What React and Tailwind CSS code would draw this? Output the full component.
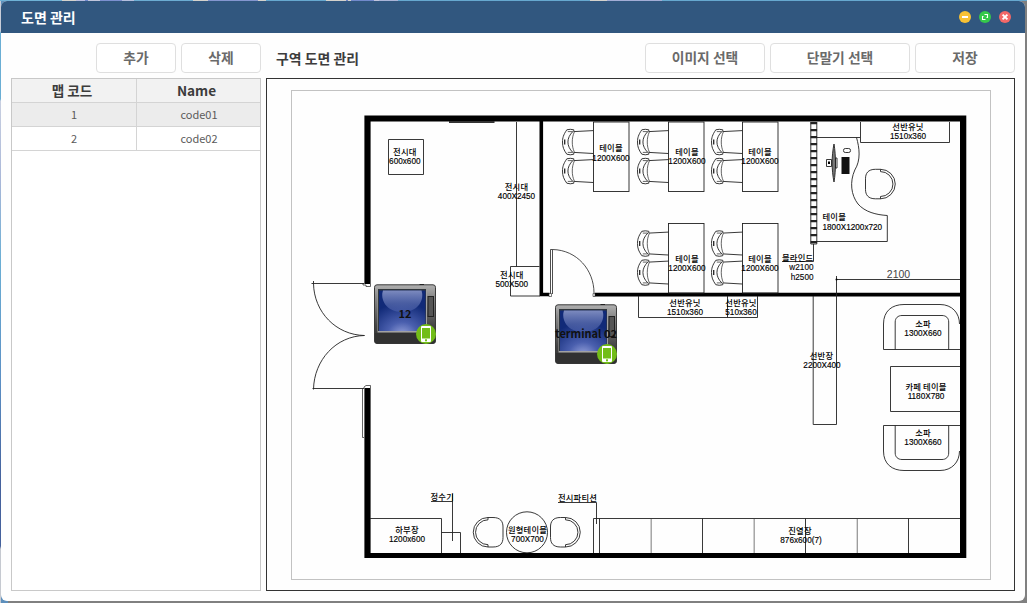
import React from "react";

const DESKTOP_STRIP = [
  [62, "#6fb2d6"], [14, "#d4d2cc"], [9, "#b9bde0"], [3, "#6d87cc"], [12, "#c0c6dc"], [22, "#7c90d0"], [12, "#b4bede"],
  [59, "#6cacd2"], [15, "#d4d2cc"], [50, "#8496cf"], [8, "#d4d2cc"], [60, "#66a8cf"], [20, "#d4d2cc"], [2, "#6f84c8"],
  [3, "#d4d2cc"], [23, "#7189cb"], [5, "#c0c4dc"], [19, "#a9b4d8"], [192, "#66a8cf"], [17, "#d4d2cc"], [55, "#a3add6"],
  [365, "#66a8cf"],
];

function ToolButton({ className, children }) {
  return (
    <button className={`flex h-[30px] items-center justify-center rounded-[4px] border border-[#dfdfdf] bg-white text-[13.8px] font-bold leading-none text-[#6a6a6a] ${className}`}>
      {children}
    </button>
  );
}

function WindowControls() {
  return (
    <div className="flex gap-2">
      <svg className="size-3" viewBox="0 0 12 12">
        <circle cx="6" cy="6" r="6" fill="#f8c134" />
        <rect x="3" y="5" width="6" height="2" fill="#fff" />
      </svg>
      <svg className="size-3" viewBox="0 0 12 12">
        <circle cx="6" cy="6" r="6" fill="#35c84b" />
        <path d="M5.500 3.500H8.500V6.500H7.500M6.500 8.500H3.500V5.500H4.500" fill="none" stroke="#fff" strokeWidth="1.1" />
      </svg>
      <svg className="size-3" viewBox="0 0 12 12">
        <circle cx="6" cy="6" r="6" fill="#f26868" />
        <path d="M3.600 3.600l4.800 4.800M8.400 3.600L3.600 8.400" stroke="#fff" strokeWidth="1.9" />
      </svg>
    </div>
  );
}

/* Two-line label: Korean name above its dimensions. */
function Label({ x, y, name, size, dx = 0, anchor = "middle" }) {
  return (
    <g textAnchor={anchor} fill="#000">
      <text x={x + dx} y={y} stroke="none" className="text-[8.3px] font-medium tracking-[0.2px]">{name}</text>
      {size && (
        <text x={x} y={y + 9.4} stroke="#000" strokeWidth=".15" className="font-['Liberation_Sans',sans-serif] text-[8.2px]">{size}</text>
      )}
    </g>
  );
}

function SideChair({ x, y }) {
  return (
    <g transform={`translate(${x} ${y})`} strokeWidth=".9">
      <path d="M4.500 .8 Q8 -.2 11.500 .8 V2.600 M4.500 .8 C1 6 .2 9 .2 13 C.2 18 1.500 21 4.500 25.200 Q8 26.400 11.500 25.200 V23.400" />
      <path d="M5.500 2.600 H10.500 M5.500 23.400 H10.500" strokeWidth=".7" />
      <path d="M10.500 2.600 C4 9 4 17 10.500 23.400" />
      <path d="M12 3 C9.300 9 9.300 17 12 23" strokeWidth=".7" />
      <path d="M11.500 2.600 L31 1.600 M11.500 23.400 L31 24.500" />
      <path d="M2.400 10.500 V15.500" strokeWidth="1.3" />
    </g>
  );
}

function RoundChair({ x, y, flip }) {
  return (
    <g transform={flip ? `translate(${x + 30} ${y}) scale(-1 1)` : `translate(${x} ${y})`}>
      <path d="M15 0 H10 C2.500 0 0 4 0 9.500 V20 C0 25.500 2.500 29.500 10 29.500 H15 A14.750 14.750 0 0 0 15 0 Z" />
      <path d="M15 0 V2.300 A12.450 12.450 0 0 1 15 27.200 V29.500" />
    </g>
  );
}

const TABLES = [
  { x: 593.5, y: 122, chair: 562.3, label: [611, 151.3] },
  { x: 668.5, y: 122, chair: 637.3, label: [687, 155] },
  { x: 742.5, y: 122, chair: 711.3, label: [760, 155] },
  { x: 668.5, y: 223.5, chair: 637.3, label: [687, 261.5] },
  { x: 742.5, y: 223.5, chair: 711.3, label: [760, 261.5] },
];

function FloorPlan() {
  return (
    <svg className="block h-full w-full" viewBox="292 91 698 488" fill="none" stroke="#222" strokeWidth=".9">
      {/* outer and inner walls */}
      <g fill="#000" stroke="none">
        <path d="M364.400 115.400H966.300V558H364.400V388H370.600V552.900H960V121.600H370.600V284H364.400Z" />
        <path d="M539.500 121H543.100V292.800H549.500V296.200H539.500Z" />
        <path d="M594.800 292.800H961V296.400H594.800Z" />
        <path d="M449 121H494.500V123H449Z" fill="#333" />
      </g>

      {/* entrance double door */}
      <path d="M311.500 283.500H364M313.500 281V283.500C314 312 336 335 364.500 335.500C336 336 314 360 313.500 389.500M312.500 388.500H364" />
      <path d="M363 283V285H366V286.500H370.500V284M364 388V387L366 385.500H370.500V388M362.500 388.500V437.500H364" strokeWidth=".7" />
      {/* meeting room door */}
      <path d="M550.500 294V249.500H552.500V294M552.500 249.500C577 250 594 270 594 293" strokeWidth=".8" />
      <path d="M549 293.500h2.500v3h-2.500zM593 293.500h2v3h-2z" fill="#fff" strokeWidth=".6" />

      {/* showcases */}
      <path d="M388.500 139.500H423.500V174.500H388.500ZM516.500 122V266.500M510.500 266.500H539.500M510.500 266.500V296H540" />
      <Label x={404.8} y={154.8} name="전시대" size="600x600" />
      <Label x={516.5} y={189.8} name="전시대" size="400X2450" />
      <Label x={511.8} y={277.8} name="전시대" size="500X500" />

      {/* meeting tables */}
      {TABLES.map((t) => (
        <g key={`${t.x}-${t.y}`}>
          <rect x={t.x} y={t.y} width="35.500" height="69.500" />
          <SideChair x={t.chair} y={t.y + 7} />
          <SideChair x={t.chair} y={t.y + 36} />
          <Label x={t.label[0]} y={t.label[1]} name="테이블" size="1200X600" />
        </g>
      ))}

      {/* shelf units under the inner wall */}
      <path d="M638.500 296V317.500H757.500V296M727.500 296V317.500" />
      <Label x={685} y={305.6} name="선반유닛" size="1510x360" />
      <Label x={741} y={305.6} name="선반유닛" size="510x360" />

      {/* blind */}
      <path d="M810.800 122V244H816.800V122" />
      <path d="M813.800 122V244" strokeWidth="6.500" strokeDasharray="2.300 4.700" />
      <path d="M813.500 244V261.500H782" />
      <Label x={782} y={261} name="블라인드" anchor="start" />
      <g textAnchor="end" fill="#000" strokeWidth=".15" className="font-['Liberation_Sans',sans-serif] text-[8.2px]">
        <text x="813.500" y="270.400">w2100</text>
        <text x="813.500" y="280.100">h2500</text>
      </g>

      {/* office desk */}
      <path d="M817 137.500H860M860.500 122V142.500H949.500V122" />
      <path d="M856.500 137.500C859.500 148 861 160 854.800 170C849.500 182 851 195 858 204C865 212 876 214.800 887.300 215.500V241.500H817" />
      <path d="M834 144C836 156 836 170 834 182C831.500 170 831.500 156 834 144Z" fill="#777" />
      <path d="M826.500 159.500h5v7h-5zM835.500 158h1.500v10h-1.500z" />
      <rect x="828" y="161.500" width="2" height="2.500" fill="#000" stroke="none" />
      <rect x="841.500" y="157" width="8" height="17" fill="#111" stroke="none" />
      <path d="M841.500 157v17" stroke="#888" />
      <rect x="843.500" y="148.500" width="7" height="4" rx="1.800" />
      <RoundChair x={865.5} y={169.3} />
      <Label x={908} y={129.6} name="선반유닛" size="1510x360" />
      <Label x={822.5} y={220.2} name="테이블" size="1800X1200x720" anchor="start" />

      {/* dimension line and shelf */}
      <path d="M836.500 276V424.500H813.200V296M836.500 279.500H960" />
      <circle cx="836.500" cy="279.500" r="1" fill="#000" stroke="none" />
      <text x="898.500" y="278" textAnchor="middle" fill="#444" stroke="none" className="font-['Liberation_Sans',sans-serif] text-[10.5px]">2100</text>
      <Label x={822} dx={-0.5} y={358.8} name="선반장" size="2200X400" />

      {/* sofas and cafe table */}
      <path d="M960 349.500H883.500V324C883.500 311 892 304.500 904 304.500H940C952 304.500 959.500 313 959.500 324" />
      <path d="M895.200 349.500V322C895.200 318 898 315.500 902 315.500H942C946 315.500 948.700 318 948.700 322V349.500" />
      <path d="M960 425.500H883.500V451C883.500 464 892 470.500 904 470.500H940C952 470.500 959.500 462 959.500 451" />
      <path d="M895.200 425.500V453C895.200 457 898 459.500 902 459.500H942C946 459.500 948.700 457 948.700 453V425.500" />
      <path d="M960 366.500H890.500V411.500H960" />
      <Label x={923} y={326.5} name="소파" size="1300X660" />
      <Label x={926} y={390} name="카페 테이블" size="1180X780" />
      <Label x={923} y={435.7} name="소파" size="1300X660" />

      {/* lower cabinet and water purifier */}
      <path d="M370 518.500H441.500V553M441.500 532.500H460.500V553M431 501.500H452.500M452.500 494V541" />
      <Label x={407} y={532.6} name="하부장" size="1200x600" />
      <Label x={430.5} y={500.3} name="정수기" anchor="start" />

      {/* round table with two chairs */}
      <circle cx="527" cy="532.300" r="20.500" />
      <RoundChair x={473} y={517.5} flip />
      <RoundChair x={550.5} y={517.5} />
      <Label x={527.5} y={532.6} name="원형테이블" size="700X700" />

      {/* partition and display cases */}
      <path d="M558 502.500H596.500V524M593.500 553V518.500H960M599.500 518.500V553" />
      <path d="M702.500 518.500V553M805.500 518.500V553M908.500 518.500V553" />
      <path d="M651.200 519V553M754.200 519V553M857.300 519V553" stroke="#999" strokeWidth="1.300" />
      <Label x={577.5} y={501.2} name="전시파티션" />
      <Label x={801} dx={-1} y={534} name="진열장" size="876x600(7)" />
    </svg>
  );
}

function Terminal({ id, name, className }) {
  return (
    <div className={`absolute h-[60px] w-[62px] ${className}`}>
      <svg className="block h-full w-full" viewBox="0 0 62 60">
        <defs>
          <linearGradient id={`case-${id}`} x1="0" y1="0" x2="0" y2="1">
            <stop offset="0" stopColor="#b0b0b0" />
            <stop offset=".2" stopColor="#8a8a8a" />
            <stop offset=".7" stopColor="#444" />
            <stop offset="1" stopColor="#303030" />
          </linearGradient>
          <radialGradient id={`screen-${id}`} cx=".5" cy="1.100" r=".8">
            <stop offset="0" stopColor="#98a4dc" />
            <stop offset=".4" stopColor="#4a5fae" />
            <stop offset="1" stopColor="#112a78" />
          </radialGradient>
          <linearGradient id={`gloss-${id}`} x1="0" y1="0" x2="0" y2="1">
            <stop offset="0" stopColor="#98a3d0" stopOpacity=".8" />
            <stop offset="1" stopColor="#5c70b8" stopOpacity=".4" />
          </linearGradient>
        </defs>
        <rect x=".5" y=".8" width="61" height="58.700" rx="2.500" fill={`url(#case-${id})`} stroke="#3a3a3a" />
        <path d="M45.500 .5h4.500" stroke="#222" />
        <path d="M1 49h60v8q0 2.500-2.500 2.500h-55q-2.500 0-2.500-2.500z" fill="#313131" />
        <rect x="3.500" y="5.500" width="49.500" height="43" fill="#a2a2a2" />
        <rect x="4" y="5" width="48" height="42" fill="#30363c" />
        <rect x="5" y="6.500" width="46.500" height="40.500" fill={`url(#screen-${id})`} />
        <path d="M9 6.500H47.500C50.500 15 45 28 28.300 28S6 15 9 6.500Z" fill={`url(#gloss-${id})`} />
        <rect x="54" y="12.500" width="5.500" height="20" fill="#555" stroke="#222" />
        <circle cx="52" cy="50" r="10" fill="#72bd18" />
        <rect x="47" y="42" width="10" height="16" rx="1" fill="#fff" />
        <rect x="48" y="44" width="8" height="10.500" fill="#72bd18" />
        <rect x="51" y="55.300" width="2" height="2" fill="#72bd18" />
      </svg>
      <span className="absolute inset-x-0 top-[21px] flex justify-center whitespace-nowrap text-[11px] font-bold leading-[16px] text-[#111]">
        {name}
      </span>
    </div>
  );
}

const MAPS = [
  { code: "1", name: "code01", selected: true },
  { code: "2", name: "code02", selected: false },
];

function MapTable() {
  return (
    <div className="h-[513px] w-[250px] border border-[#c8c8c8] bg-white">
      <div className="grid h-6 grid-cols-[125px_1fr] border-b border-[#d4d4d4] bg-[#f2f2f2] text-center text-[13.6px] font-bold leading-[23px] text-[#3c3c3c]">
        <div className="border-r border-[#d4d4d4] pr-1">맵 코드</div>
        <div className="pr-1">Name</div>
      </div>
      {MAPS.map((m) => (
        <div
          key={m.code}
          className={`grid h-6 grid-cols-[125px_1fr] border-b border-[#d4d4d4] text-center text-[11px] leading-[23px] text-[#5a5a5a] ${m.selected ? "bg-[#ececec]" : "bg-white"}`}
        >
          <div className="border-r border-[#d4d4d4]">{m.code}</div>
          <div className="pl-px">{m.name}</div>
        </div>
      ))}
    </div>
  );
}

export default function App() {
  return (
    <div className="flex h-[603px] w-[1027px] flex-col overflow-hidden bg-[#808080] font-['Noto_Sans_CJK_KR',sans-serif]">
      <div className="flex h-px shrink-0">
        {DESKTOP_STRIP.map(([width, color], i) => (
          <div key={i} className="h-px shrink-0" style={{ width, backgroundColor: color }} />
        ))}
      </div>
      <div className="flex h-[602px] bg-[linear-gradient(to_right,#5d8fbc_8px,#808080_8px)]">
        <div className="w-px shrink-0 bg-[linear-gradient(to_bottom,#c8cdd8_0,#c8cdd8_30px,#6aaed4_32px,#6aaed4_98px,#c8cfe0_100px,#a9b7d8_180px,#6aaed4_260px,#5b8fc4_380px,#44619c_480px,#44619c_545px,#c5c9d0_548px)]" />
        <main className="flex h-[600px] w-[1024px] flex-col overflow-hidden rounded-[6px] bg-[#fefefe]">
          <header className="flex h-8 items-center justify-between bg-[#31577f] pl-5 pr-[14px] text-white">
            <h1 className="text-[14px] font-bold leading-[31px]">도면 관리</h1>
            <WindowControls />
          </header>
          <div className="flex gap-[5px] pl-[10px] pt-[10px]">
            <section className="w-[250px]">
              <div className="mb-[5px] flex justify-end gap-[5px]">
                <ToolButton className="w-[80px]">추가</ToolButton>
                <ToolButton className="w-[80px]">삭제</ToolButton>
              </div>
              <MapTable />
            </section>
            <section className="w-[749px]">
              <div className="mb-[5px] flex items-center gap-[5px] pl-[10px]">
                <h2 className="flex-1 text-[13.9px] font-bold leading-[30px] text-[#3c3c3c]">구역 도면 관리</h2>
                <ToolButton className="w-[120px]">이미지 선택</ToolButton>
                <ToolButton className="w-[140px]">단말기 선택</ToolButton>
                <ToolButton className="w-[100px]">저장</ToolButton>
              </div>
              <div className="h-[513px] border border-[#333] pl-6 pt-[11px]">
                <div className="relative h-[490px] w-[700px] border border-[#c2c2c2]">
                  <FloorPlan />
                  <Terminal id="t1" name="12" className="left-[82px] top-[193px]" />
                  <Terminal id="t2" name="terminal 02" className="left-[263px] top-[213px]" />
                </div>
              </div>
            </section>
          </div>
        </main>
      </div>
    </div>
  );
}
